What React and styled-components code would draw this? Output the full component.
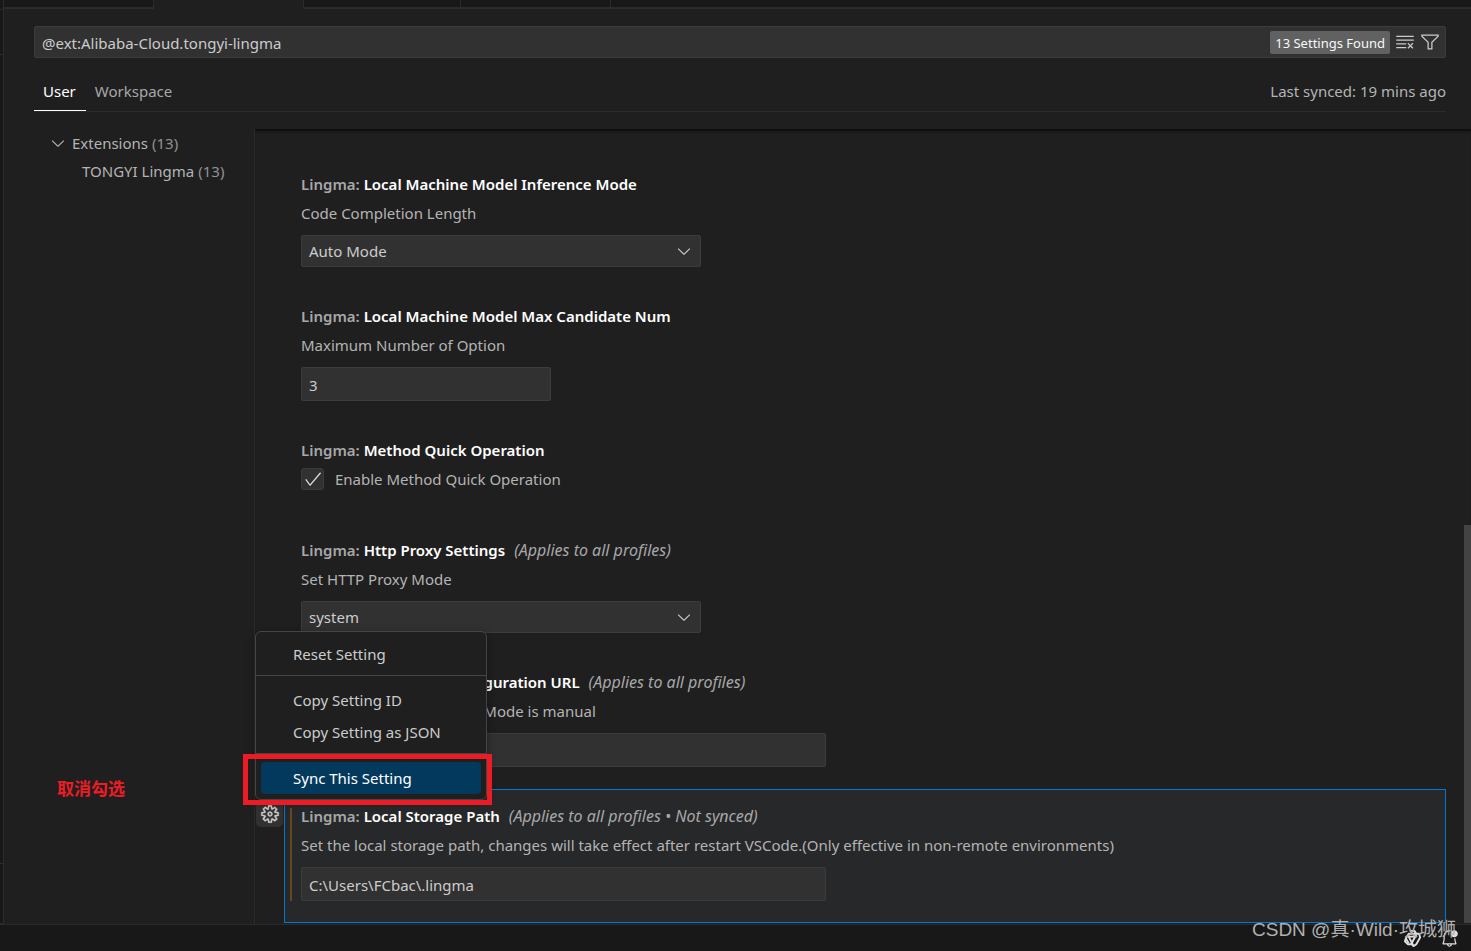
import React, { useState } from 'react'
import styled, { createGlobalStyle } from 'styled-components'
import {
  VscBellDot,
  VscCheck,
  VscChevronDown,
  VscClearAll,
  VscFilter,
  VscGear,
} from 'react-icons/vsc'

const GlobalStyle = createGlobalStyle`
  * {
    box-sizing: border-box;
  }
  body {
    margin: 0;
    background: #1f1f1f;
    color: #b4b4b4;
    font-family: "Noto Sans", "Noto Sans CJK SC", sans-serif;
    font-size: 15px;
    line-height: 20px;
  }
  button, input, select {
    font: inherit;
    color: inherit;
  }
`;
const Page = styled.div`
  position: relative;
  display: flex;
  flex-direction: column;
  min-height: 100vh;
  overflow: hidden;
`;
const Workbench = styled.div`
  display: flex;
  flex: 1;
`;
const SideEdge = styled.div`
  display: flex;
  flex-direction: column;
  justify-content: space-between;
  width: 4px;
  padding-top: 9px;
  background: #181818;
  border-right: 1px solid #2b2b2b;
`;
const SideBlock = styled.div`
  height: ${props => props.$height}px;
  border-top: 1px solid #2b2b2b;
  border-bottom: 1px solid #2b2b2b;
`;
const Editor = styled.main`
  display: flex;
  flex-direction: column;
  flex: 1;
  min-width: 0;
`;
const FileTabs = styled.div`
  display: flex;
  height: 9px;
`;
const FileTab = styled.div`
  width: ${props => props.$width}px;
  background: ${props => props.$active ? '#1f1f1f' : '#181818'};
  border-right: 1px solid #2b2b2b;
  border-bottom: ${props => props.$active ? 'none' : '2px solid #2b2b2b'};
`;
const TabFiller = styled.div`
  flex: 1;
  background: #181818;
  border-bottom: 2px solid #2b2b2b;
`;
const Header = styled.header`
  padding: 17px 25px 0 30px;
`;
const SearchBox = styled.div`
  display: flex;
  align-items: center;
  gap: 5px;
  height: 32px;
  padding-right: 5px;
  background: #313131;
  border: 1px solid #3c3c3c;
  border-radius: 2px;

  &>input {
    flex: 1;
    min-width: 0;
    padding: 2px 7px 0;
    color: #cccccc;
    background: none;
    border: none;
    outline: none;
  }
`;
const Count = styled.span`
  height: 23px;
  padding: 0 5px;
  color: #f8f8f8;
  font-size: 13px;
  line-height: 25px;
  background: #616161;
  border-radius: 2px;
`;
const IconButton = styled.button`
  display: flex;
  padding: 0;
  color: #cccccc;
  background: none;
  border: none;
  font-size: 20px;
`;
const ScopeBar = styled.div`
  display: flex;
  justify-content: space-between;
  height: 54px;
  border-bottom: 1px solid #2b2b2b;

  &>nav {
    display: flex;
  }
  &>span {
    padding-top: 23px;
  }
`;
const Scope = styled.button`
  height: 53px;
  padding: 14px 10px 0 9px;
  color: ${props => props.$active ? '#ffffff' : '#a8a8a8'};
  background: none;
  border: none;
  border-bottom: 1px solid ${props => props.$active ? '#ffffff' : 'transparent'};
`;
const Body = styled.div`
  display: flex;
  flex: 1;
  padding-top: 17px;
`;
const Toc = styled.nav`
  width: 251px;
  border-right: 1px solid #2b2b2b;
`;
const TocRow = styled.a`
  display: flex;
  align-items: center;
  height: 28px;
  padding-left: ${props => props.$indent}px;
  color: #b4b4b4;
  text-decoration: none;

  &>svg {
    margin-right: 4px;
    font-size: 20px;
  }
  &>span {
    margin-left: 4px;
    color: #929292;
  }
`;
const Content = styled.section`
  display: flex;
  flex: 1;
  min-width: 0;
  box-shadow: inset 0 4px 3px -2px #0c0c0c;
`;
const List = styled.div`
  flex: 1;
  min-width: 0;
  padding: 28px 18px 1px 0;
`;
const ScrollBar = styled.div`
  width: 7px;
  margin-top: 396px;
  margin-bottom: 1px;
  background: #434343;
`;
const Row = styled.article`
  display: flex;
`;
const Gutter = styled.div`
  width: 29px;
  padding-top: 11px;
`;
const GearWrap = styled.div`
  position: relative;
`;
const GearButton = styled.button`
  display: flex;
  align-items: center;
  justify-content: center;
  width: 27px;
  height: 27px;
  margin-left: 1px;
  padding: 0;
  color: #cccccc;
  background: #313131;
  border: none;
  border-radius: 5px;
  font-size: 20px;

  &>svg {
    stroke: currentColor;
    stroke-width: 0.3;
  }
`;
const Frame = styled.div`
  flex: 1;
  min-width: 0;
  padding: 18px 5px ${props => props.$bottom}px;
  background: ${props => props.$focused ? '#27282a' : 'none'};
  border: 1px solid ${props => props.$focused ? '#0078d4' : 'transparent'};
`;
const Inner = styled.div`
  padding-left: 9px;
  border-left: 2px solid ${props => props.$modified ? '#66491a' : 'transparent'};
`;
const Title = styled.h3`
  margin: 0;
  color: #a8a8a8;
  font-size: 15px;
  font-weight: 600;
  line-height: 16px;
  white-space: nowrap;

  &>b {
    color: #ffffff;
    font-weight: 600;
  }
  &>em {
    margin-left: 9px;
    font-size: 16px;
    font-weight: 400;
  }
`;
const Desc = styled.p`
  margin: 11px 0 12px;
`;
const TextInput = styled.input`
  display: block;
  width: ${props => props.$width}px;
  max-width: 100%;
  height: 34px;
  padding: 2px 7px 0;
  color: #cccccc;
  background: #313131;
  border: 1px solid #3c3c3c;
  border-radius: 2px;
`;
const SelectWrap = styled.div`
  display: grid;
  align-items: center;
  width: 400px;
  max-width: 100%;

  &>select, &>svg {
    grid-area: 1 / 1;
  }
  &>select {
    height: 32px;
    padding: 0 7px;
    color: #cccccc;
    background: #313131;
    border: 1px solid #3c3c3c;
    border-radius: 2px;
    appearance: none;
  }
  &>svg {
    justify-self: end;
    margin-right: 7px;
    color: #cccccc;
    font-size: 20px;
    pointer-events: none;
  }
`;
const CheckLabel = styled.label`
  display: flex;
  align-items: center;
  gap: 11px;
  margin-top: 10px;

  &>span {
    display: grid;
    width: 23px;
    height: 22px;
  }
  &>span>* {
    grid-area: 1 / 1;
    place-self: center;
  }
  & input {
    width: 100%;
    height: 100%;
    margin: 0;
    background: #313131;
    border: 1px solid #3c3c3c;
    border-radius: 3px;
    appearance: none;
  }
  & svg {
    color: #dddddd;
    font-size: 20px;
    pointer-events: none;
  }
`;
const Menu = styled.div`
  position: absolute;
  bottom: 100%;
  left: 0;
  z-index: 2;
  width: 232px;
  padding: 6px 0 5px;
  background: #1f1f1f;
  border: 1px solid #454545;
  border-radius: 6px;
  box-shadow: 0 2px 8px rgba(0, 0, 0, 0.36);

  &>hr {
    height: 1px;
    margin: 5px 0 8px;
    background: #454545;
    border: none;
  }
`;
const MenuItem = styled.button`
  display: block;
  width: 220px;
  height: 32px;
  margin: 0 5px;
  padding: 0 32px;
  color: ${props => props.$active ? '#ffffff' : '#cccccc'};
  background: ${props => props.$active ? '#04395e' : 'none'};
  border: none;
  border-radius: 4px;
  text-align: left;
  white-space: nowrap;
`;
const RedFrame = styled.div`
  position: absolute;
  right: -6px;
  bottom: -6px;
  width: 249px;
  height: 51px;
  border: 5px solid #ed1c24;
  pointer-events: none;
`;
const Note = styled.div`
  position: absolute;
  top: 779px;
  left: 57px;
  color: #ed1c24;
  font-size: 17px;
  font-weight: 700;
`;
const StatusBar = styled.footer`
  display: flex;
  justify-content: flex-end;
  align-items: center;
  gap: 18px;
  height: 27px;
  padding-right: 12px;
  background: #181818;
  border-top: 1px solid #2b2b2b;
  color: #e0e0e0;
  font-size: 19px;
`;
const Watermark = styled.div`
  position: absolute;
  right: 15px;
  bottom: 8px;
  color: #b0b0b0;
  font-family: "Liberation Sans", "Noto Sans CJK SC", sans-serif;
  font-size: 19px;
  line-height: 26px;
`;

const settings = [
  { id: 'inference', name: 'Local Machine Model Inference Mode', desc: 'Code Completion Length', type: 'select', value: 'Auto Mode' },
  { id: 'candidate', name: 'Local Machine Model Max Candidate Num', desc: 'Maximum Number of Option', type: 'text', value: '3', width: 250 },
  { id: 'quick', name: 'Method Quick Operation', desc: 'Enable Method Quick Operation', type: 'check' },
  { id: 'proxy', name: 'Http Proxy Settings', scope: '(Applies to all profiles)', desc: 'Set HTTP Proxy Mode', type: 'select', value: 'system' },
  { id: 'proxyUrl', name: 'Http Proxy Configuration URL', scope: '(Applies to all profiles)', desc: 'Applies when HTTP Proxy Mode is manual', type: 'text', value: '', width: 525 },
  { id: 'storage', name: 'Local Storage Path', scope: '(Applies to all profiles • Not synced)', desc: 'Set the local storage path, changes will take effect after restart VSCode.(Only effective in non-remote environments)', type: 'text', value: 'C:\\Users\\FCbac\\.lingma', width: 525, focused: true },
]

function LingmaIcon() {
  return (
    <svg width="19" height="19" viewBox="0 0 20 20" fill="none" stroke="currentColor" strokeWidth="2" strokeLinejoin="round">
      <path d="M7 2h5l2 3H6L3 10l3 5" />
      <path d="M14 5h3l1 4-4 7-3 2-2-3 5-9" />
      <path d="M3 10l-1 3 3 3h5L6 8h8" />
    </svg>
  )
}

function GearMenu() {
  return (
    <GearWrap>
      <GearButton aria-label="More Actions"><VscGear /></GearButton>
      <Menu role="menu">
        <MenuItem role="menuitem">Reset Setting</MenuItem>
        <hr />
        <MenuItem role="menuitem">Copy Setting ID</MenuItem>
        <MenuItem role="menuitem">Copy Setting as JSON</MenuItem>
        <hr />
        <MenuItem role="menuitem" $active>Sync This Setting</MenuItem>
        <RedFrame />
      </Menu>
    </GearWrap>
  )
}

function Control({ item }) {
  const [value, setValue] = useState(item.value)
  const [checked, setChecked] = useState(true)

  if (item.type === 'check') {
    return (
      <CheckLabel>
        <span>
          <input type="checkbox" checked={checked} onChange={e => setChecked(e.target.checked)} />
          {checked && <VscCheck />}
        </span>
        {item.desc}
      </CheckLabel>
    )
  }
  return (
    <>
      <Desc>{item.desc}</Desc>
      {item.type === 'select' ? (
        <SelectWrap>
          <select aria-labelledby={item.id} value={value} onChange={e => setValue(e.target.value)}>
            <option>{item.value}</option>
          </select>
          <VscChevronDown />
        </SelectWrap>
      ) : (
        <TextInput
          type="text"
          aria-labelledby={item.id}
          $width={item.width}
          value={value}
          onChange={e => setValue(e.target.value)}
        />
      )}
    </>
  )
}

function Setting({ item }) {
  return (
    <Row>
      <Gutter>{item.focused && <GearMenu />}</Gutter>
      <Frame $focused={item.focused} $bottom={item.type === 'check' ? 32 : 21}>
        <Inner $modified={item.focused}>
          <Title id={item.id}>
            Lingma: <b>{item.name}</b>
            {item.scope && <em>{item.scope}</em>}
          </Title>
          <Control item={item} />
        </Inner>
      </Frame>
    </Row>
  )
}

export default function App() {
  const [query, setQuery] = useState('@ext:Alibaba-Cloud.tongyi-lingma')

  return (
    <Page>
      <GlobalStyle />
      <Workbench>
        <SideEdge>
          <SideBlock $height={46} />
          <SideBlock $height={61} />
        </SideEdge>
        <Editor>
          <FileTabs>
            <FileTab $width={150} />
            <FileTab $width={150} $active />
            <FileTab $width={157} />
            <FileTab $width={150} />
            <TabFiller />
          </FileTabs>
          <Header>
            <SearchBox>
              <input aria-label="Search settings" value={query} onChange={e => setQuery(e.target.value)} />
              <Count>13 Settings Found</Count>
              <IconButton aria-label="Clear Settings Search Input"><VscClearAll /></IconButton>
              <IconButton aria-label="Filter Settings"><VscFilter /></IconButton>
            </SearchBox>
            <ScopeBar>
              <nav>
                <Scope $active>User</Scope>
                <Scope>Workspace</Scope>
              </nav>
              <span>Last synced: 19 mins ago</span>
            </ScopeBar>
          </Header>
          <Body>
            <Toc>
              <TocRow href="#extensions" $indent={44}>
                <VscChevronDown />Extensions<span>(13)</span>
              </TocRow>
              <TocRow href="#lingma" $indent={78}>
                TONGYI Lingma<span>(13)</span>
              </TocRow>
            </Toc>
            <Content>
              <List>
                {settings.map(item => <Setting key={item.id} item={item} />)}
              </List>
              <ScrollBar />
            </Content>
          </Body>
        </Editor>
      </Workbench>
      <StatusBar>
        <LingmaIcon />
        <VscBellDot />
      </StatusBar>
      <Note>取消勾选</Note>
      <Watermark>CSDN @真·Wild·攻城狮</Watermark>
    </Page>
  )
}
